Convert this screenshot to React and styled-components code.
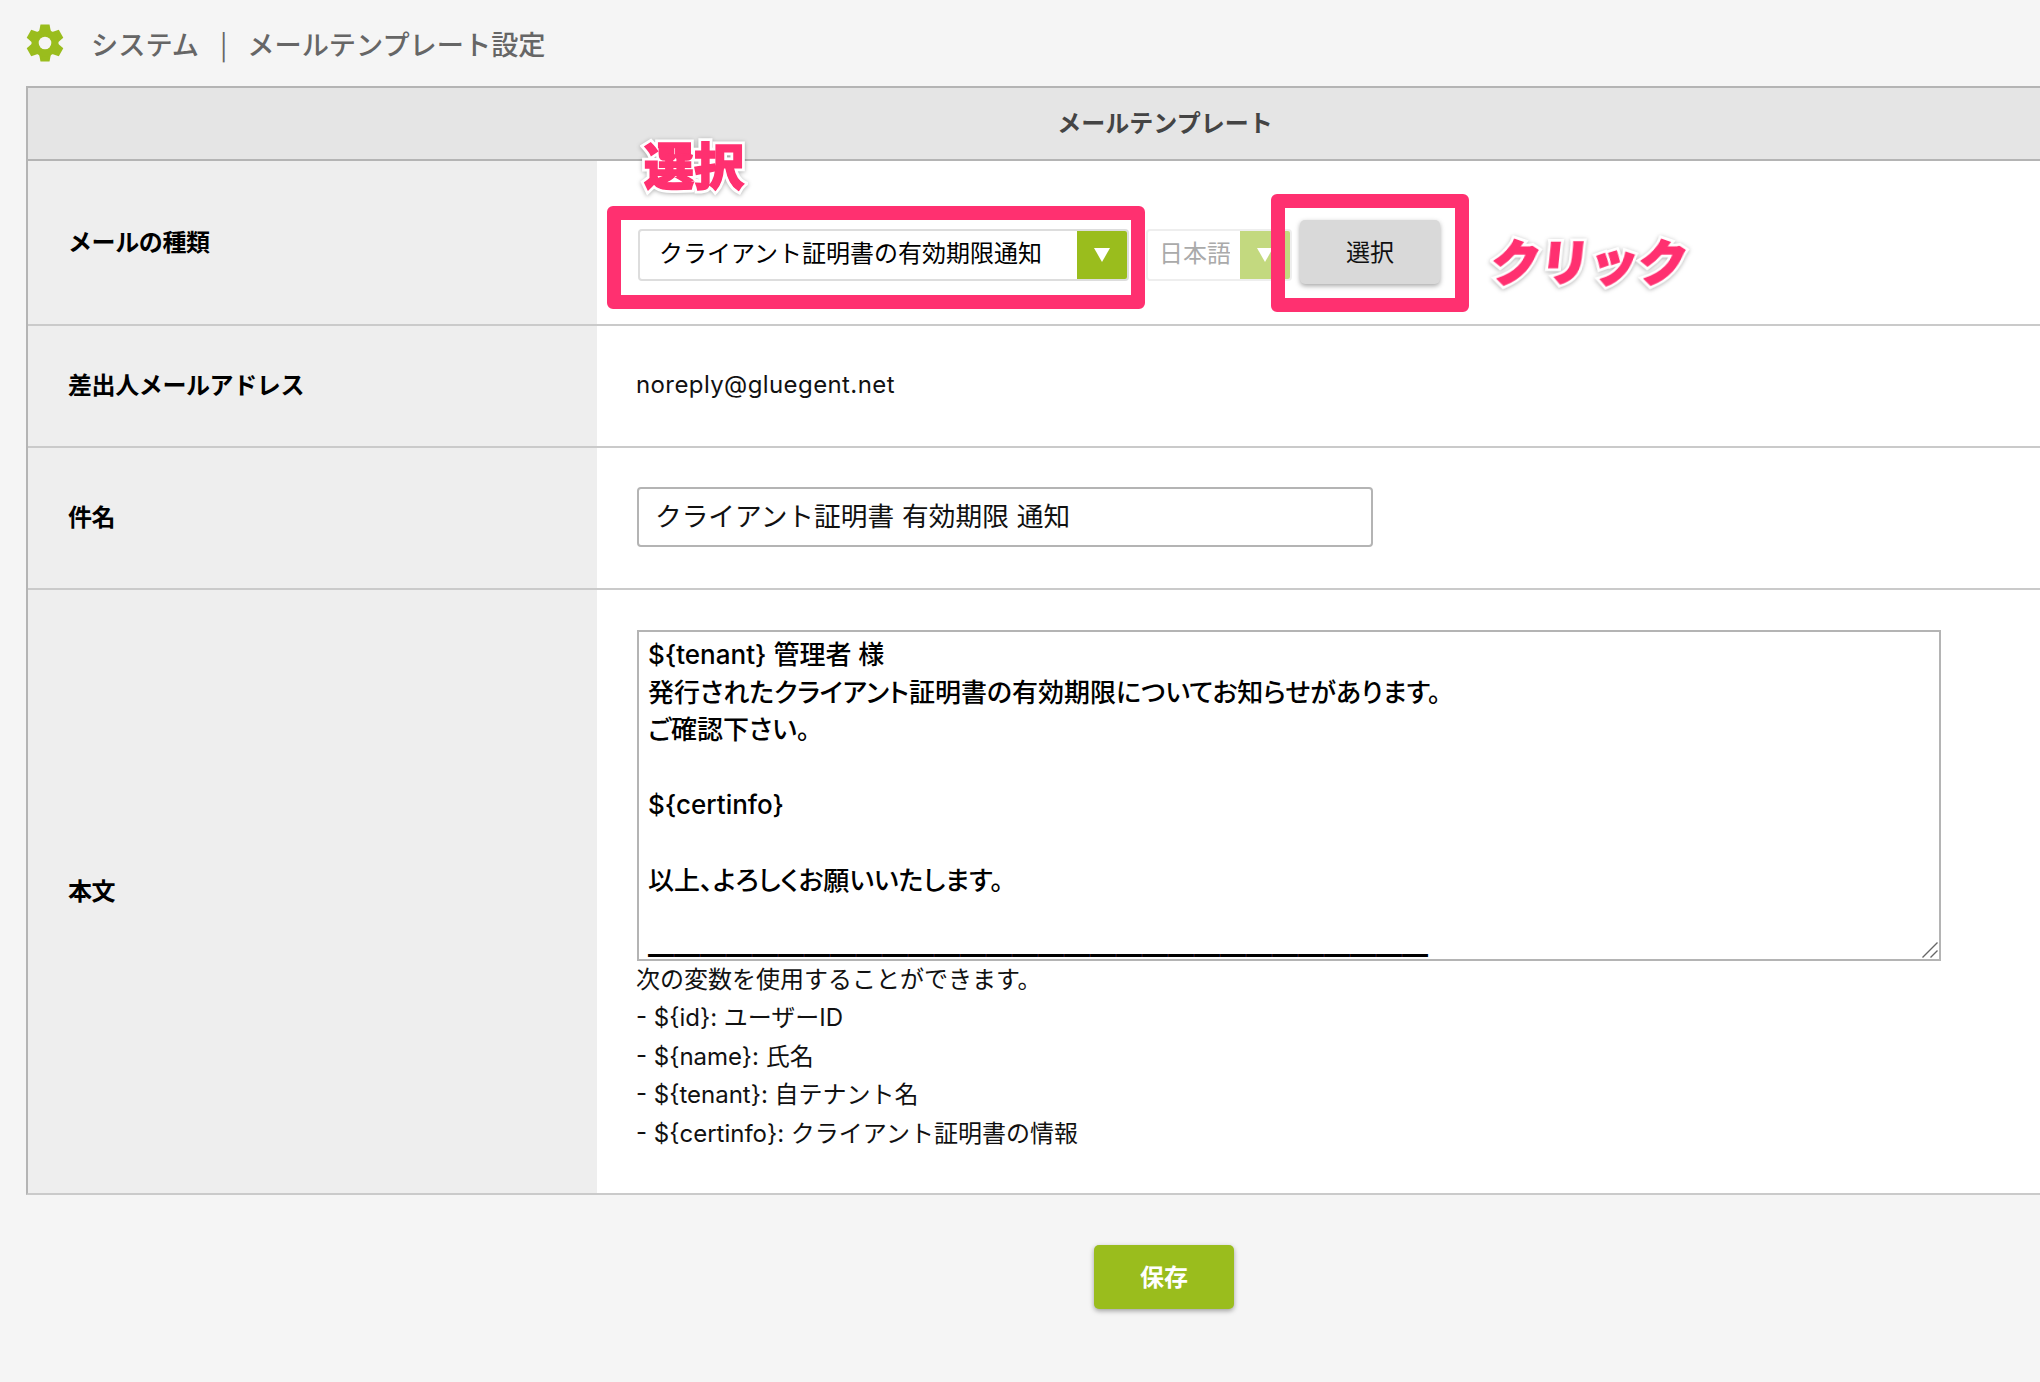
import React from 'react';
import styled, { createGlobalStyle } from 'styled-components';

const Global = createGlobalStyle`
  html, body { margin: 0; padding: 0; height: 100%; overflow: hidden; background: #f5f5f5; }
  body { font-family: Inter, "Noto Sans CJK JP", sans-serif; color: #000; }
  * { box-sizing: border-box; }
`;

const Page = styled.div`
  position: relative;
  width: 2040px;
  height: 1382px;
  overflow: hidden;
  padding: 24px 0 0 26px;
`;

const TitleBar = styled.h1`
  display: flex;
  align-items: center;
  height: 38px;
  margin: 0 0 24px;
  font-family: "Noto Sans CJK JP", sans-serif;
  font-size: 27.2px;
  font-weight: 500;
  color: #666;
`;

const GearIcon = styled.svg`
  width: 38px;
  height: 38px;
  margin-right: 27px;
  flex: none;
  fill: #9abd1d;
`;

const Sep = styled.span`
  margin: 0 20px 0 21px;
  font-weight: 400;
`;

const Table = styled.section`
  width: 2276px;
  border-top: 2px solid #b4b4b4;
  border-left: 2px solid #b4b4b4;
  border-bottom: 2px solid #cacaca;
`;

const TableHead = styled.div`
  height: 71px;
  padding-bottom: 5px;
  display: flex;
  align-items: center;
  justify-content: center;
  background: #e5e5e5;
  font-family: "Noto Sans CJK JP", sans-serif;
  font-size: 24px;
  font-weight: 700;
  color: #444;
`;

const Row = styled.div`
  display: grid;
  grid-template-columns: 569px 1fr;
  border-top: 2px solid ${p => (p.$strong ? '#b4b4b4' : '#cacaca')};
  min-height: ${p => p.$h}px;
`;

const Label = styled.div`
  display: flex;
  align-items: center;
  padding: 0 0 5px 40px;
  background: #eee;
  font-family: "Noto Sans CJK JP", sans-serif;
  font-size: 24px;
  font-weight: 700;
  letter-spacing: -0.4px;
`;

const Cell = styled.div`
  background: #fff;
  padding: ${p => p.$pad || '0 0 0 40px'};
  display: flex;
  align-items: ${p => p.$align || 'center'};
  flex-direction: ${p => p.$dir || 'row'};
  font-size: 24px;
  letter-spacing: ${p => p.$ls || 'normal'};
  color: #111;
`;

const Controls = styled.div`
  display: flex;
  align-items: flex-start;
`;

const SelectBox = styled.div`
  position: relative;
  width: ${p => p.$w}px;
  height: 52px;
  margin-top: 9px;
  margin-left: ${p => p.$ml || 0}px;
  background: #fff;
  border: 2px solid ${p => (p.$off ? '#eee' : '#ddd')};
  border-radius: 4px;
`;

const NativeSelect = styled.select`
  appearance: none;
  width: 100%;
  height: 100%;
  border: 0;
  outline: 0;
  background: transparent;
  padding: 0 60px 8px ${p => p.$pl}px;
  font-family: "Noto Sans CJK JP", sans-serif;
  font-size: 24px;
  color: ${p => (p.disabled ? '#aaa' : '#000')};
  opacity: 1;
`;

const Arrow = styled.span`
  position: absolute;
  top: 0;
  right: 0;
  width: 50px;
  height: 48px;
  border-radius: 0 2px 2px 0;
  background: ${p => (p.$off ? '#c3d97f' : '#9abd1d')};
  display: flex;
  align-items: center;
  justify-content: center;
  pointer-events: none;
  &::after {
    content: '';
    border-left: 8px solid transparent;
    border-right: 8px solid transparent;
    border-top: 14px solid #fff;
  }
`;

const Btn = styled.button`
  width: 140px;
  height: 64px;
  padding: 0 0 4px;
  border: 0;
  border-radius: 5px;
  font-family: "Noto Sans CJK JP", sans-serif;
  font-size: 24px;
  box-shadow: 0 2px 5px rgba(0, 0, 0, 0.35);
  background: ${p => (p.$primary ? '#9abd1d' : '#d9d9d9')};
  color: ${p => (p.$primary ? '#fff' : '#111')};
  font-weight: ${p => (p.$primary ? 700 : 400)};
`;

const SideBtn = styled(Btn)`
  margin-left: 8px;
`;

const TextInput = styled.input`
  width: 736px;
  height: 60px;
  padding: 0 16px 6px;
  border: 2px solid #b4b4b4;
  border-radius: 4px;
  outline: 0;
  background: #fff;
  font-family: "Noto Sans CJK JP", sans-serif;
  font-size: 26.7px;
  word-spacing: 2px;
  color: #111;
`;

const AreaWrap = styled.div`
  position: relative;
  width: 1304px;
  height: 331px;
`;

const Area = styled.textarea`
  display: block;
  width: 100%;
  height: 100%;
  padding: 4px 9px;
  border: 2px solid #b4b4b4;
  outline: 0;
  background: #fff;
  overflow: hidden;
  resize: none;
  font-family: Inter, "Noto Sans CJK JP", sans-serif;
  font-size: 26px;
  font-weight: 500;
  line-height: 37.6px;
  color: #000;
  font-feature-settings: "palt";
`;

const Grip = styled.svg`
  position: absolute;
  right: 3px;
  bottom: 3px;
  width: 16px;
  height: 16px;
  stroke: #666;
  stroke-width: 1.4;
  fill: none;
`;

const Help = styled.div`
  margin-left: -1px;
  font-size: 24px;
  line-height: 38.4px;
  color: #111;
`;

const Footer = styled.div`
  display: flex;
  justify-content: center;
  width: 2276px;
  margin-top: 50px;
`;

const Highlight = styled.div`
  position: absolute;
  left: ${p => p.$x}px;
  top: ${p => p.$y}px;
  width: ${p => p.$w}px;
  height: ${p => p.$h}px;
  border: 14px solid #ff3070;
  border-radius: 6px;
  pointer-events: none;
`;

const Callout = styled.div`
  position: absolute;
  left: ${p => p.$x}px;
  top: ${p => p.$y}px;
  font-family: "Noto Sans CJK JP", sans-serif;
  font-size: ${p => p.$size}px;
  font-weight: 900;
  line-height: 1;
  color: #ff3070;
  -webkit-text-stroke: 7px #fff;
  paint-order: stroke fill;
  filter: drop-shadow(0 1px 2px rgba(0, 0, 0, 0.3));
  transform: ${p => p.$tf || 'none'};
  white-space: nowrap;
  &::after {
    content: attr(data-label);
    position: absolute;
    left: 0;
    top: 0;
    -webkit-text-stroke: 1.5px #ff3070;
  }
`;

const body = `\${tenant} 管理者 様
発行されたクライアント証明書の有効期限についてお知らせがあります。
ご確認下さい。

\${certinfo}

以上、よろしくお願いいたします。

━━━━━━━━━━━━━━━━━━━━━━━━━━━━━━`;

const teeth = [0, 60, 120, 180, 240, 300];

export default function App() {
  return (
    <Page>
      <Global />
      <TitleBar>
        <GearIcon viewBox="0 0 38 38">
          {teeth.map(a => (
            <polygon key={a} points="13,8 14.5,0.5 23.5,0.5 25,8" transform={`rotate(${a} 19 19)`} />
          ))}
          <circle cx="19" cy="19" r="13.5" />
          <circle cx="19" cy="19" r="6.3" fill="#f5f5f5" />
        </GearIcon>
        システム<Sep>|</Sep>メールテンプレート設定
      </TitleBar>
      <Table>
        <TableHead>メールテンプレート</TableHead>
        <Row $strong $h={165}>
          <Label>メールの種類</Label>
          <Cell $align="flex-start" $pad="59px 0 0 41px">
            <Controls>
              <SelectBox $w={491}>
                <NativeSelect $pl={19} defaultValue="a">
                  <option value="a">クライアント証明書の有効期限通知</option>
                </NativeSelect>
                <Arrow />
              </SelectBox>
              <SelectBox $w={146} $ml={17} $off>
                <NativeSelect $pl={11} disabled defaultValue="ja">
                  <option value="ja">日本語</option>
                </NativeSelect>
                <Arrow $off />
              </SelectBox>
              <SideBtn>選択</SideBtn>
            </Controls>
          </Cell>
        </Row>
        <Row $h={122}>
          <Label>差出人メールアドレス</Label>
          <Cell $pad="0 0 4px 39px" $ls="0.4px">noreply@gluegent.net</Cell>
        </Row>
        <Row $h={142}>
          <Label>件名</Label>
          <Cell $pad="0 0 2px 40px"><TextInput defaultValue="クライアント証明書 有効期限 通知" /></Cell>
        </Row>
        <Row $h={605}>
          <Label>本文</Label>
          <Cell $dir="column" $align="flex-start" $pad="40px 0 40px 40px">
            <AreaWrap>
              <Area defaultValue={body} />
              <Grip viewBox="0 0 16 16">
                <path d="M0.5 15.5 L15.5 0.5 M8.5 15.5 L15.5 8.5" />
              </Grip>
            </AreaWrap>
            <Help>
              次の変数を使用することができます。<br />
              - {'${id}'}: ユーザーID<br />
              - {'${name}'}: 氏名<br />
              - {'${tenant}'}: 自テナント名<br />
              - {'${certinfo}'}: クライアント証明書の情報
            </Help>
          </Cell>
        </Row>
      </Table>
      <Footer>
        <Btn $primary>保存</Btn>
      </Footer>
      <Highlight $x={607} $y={206} $w={538} $h={103} />
      <Highlight $x={1271} $y={194} $w={198} $h={118} />
      <Callout $x={644} $y={138} $size={50} data-label="選択">選択</Callout>
      <Callout $x={1492} $y={235} $size={49} $tf="skewX(-6deg)" data-label="クリック">クリック</Callout>
    </Page>
  );
}
